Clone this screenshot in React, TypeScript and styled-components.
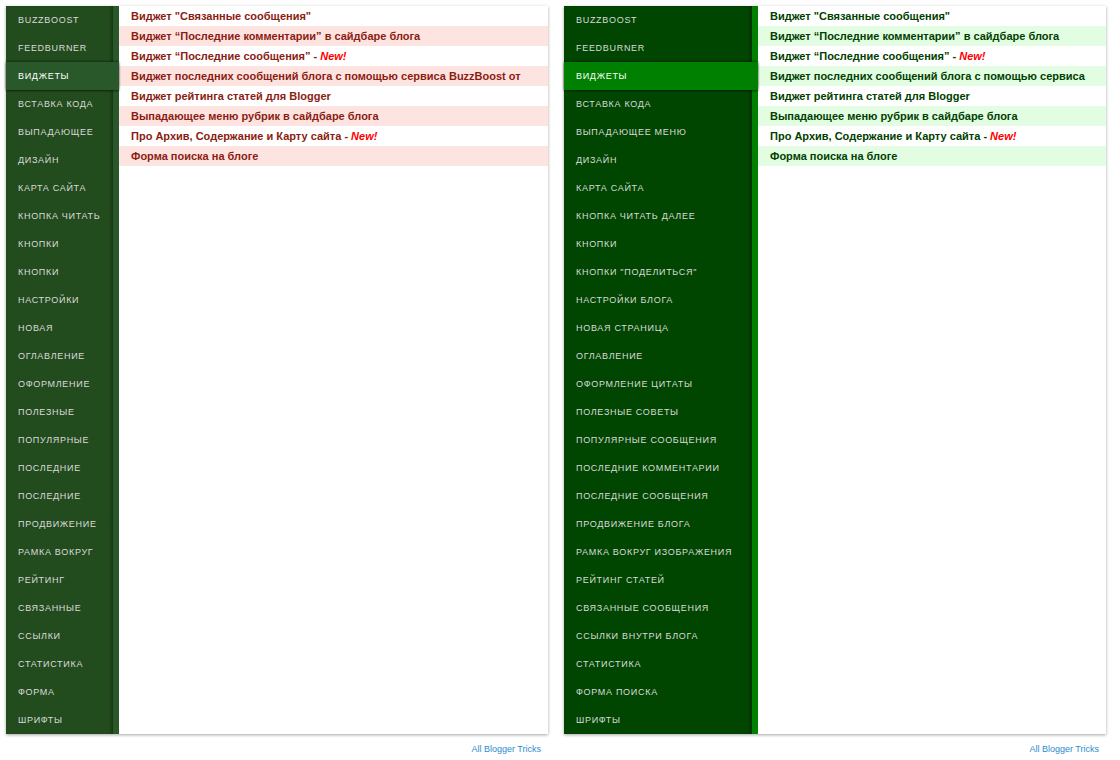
import { FC } from 'react';
import styled, { createGlobalStyle } from 'styled-components';

type Theme = 'red' | 'green';

interface IPalette {
  side: string;
  active: string;
  strip: string;
  rowAlt: string;
  text: string;
}

const palettes: Record<Theme, IPalette> = {
  red: {
    side: '#234c1e',
    active: '#29592a',
    strip: '#29592a',
    rowAlt: '#fee4e1',
    text: '#8a1c12',
  },
  green: {
    side: '#004600',
    active: '#008000',
    strip: '#008000',
    rowAlt: '#e2fde2',
    text: '#004000',
  },
};

const leftMenu = [
  'BUZZBOOST',
  'FEEDBURNER',
  'ВИДЖЕТЫ',
  'ВСТАВКА КОДА',
  'ВЫПАДАЮЩЕЕ',
  'ДИЗАЙН',
  'КАРТА САЙТА',
  'КНОПКА ЧИТАТЬ',
  'КНОПКИ',
  'КНОПКИ',
  'НАСТРОЙКИ',
  'НОВАЯ',
  'ОГЛАВЛЕНИЕ',
  'ОФОРМЛЕНИЕ',
  'ПОЛЕЗНЫЕ',
  'ПОПУЛЯРНЫЕ',
  'ПОСЛЕДНИЕ',
  'ПОСЛЕДНИЕ',
  'ПРОДВИЖЕНИЕ',
  'РАМКА ВОКРУГ',
  'РЕЙТИНГ',
  'СВЯЗАННЫЕ',
  'ССЫЛКИ',
  'СТАТИСТИКА',
  'ФОРМА',
  'ШРИФТЫ',
];

const rightMenu = [
  'BUZZBOOST',
  'FEEDBURNER',
  'ВИДЖЕТЫ',
  'ВСТАВКА КОДА',
  'ВЫПАДАЮЩЕЕ МЕНЮ',
  'ДИЗАЙН',
  'КАРТА САЙТА',
  'КНОПКА ЧИТАТЬ ДАЛЕЕ',
  'КНОПКИ',
  'КНОПКИ "ПОДЕЛИТЬСЯ"',
  'НАСТРОЙКИ БЛОГА',
  'НОВАЯ СТРАНИЦА',
  'ОГЛАВЛЕНИЕ',
  'ОФОРМЛЕНИЕ ЦИТАТЫ',
  'ПОЛЕЗНЫЕ СОВЕТЫ',
  'ПОПУЛЯРНЫЕ СООБЩЕНИЯ',
  'ПОСЛЕДНИЕ КОММЕНТАРИИ',
  'ПОСЛЕДНИЕ СООБЩЕНИЯ',
  'ПРОДВИЖЕНИЕ БЛОГА',
  'РАМКА ВОКРУГ ИЗОБРАЖЕНИЯ',
  'РЕЙТИНГ СТАТЕЙ',
  'СВЯЗАННЫЕ СООБЩЕНИЯ',
  'ССЫЛКИ ВНУТРИ БЛОГА',
  'СТАТИСТИКА',
  'ФОРМА ПОИСКА',
  'ШРИФТЫ',
];

interface IPost {
  title: string;
  isNew?: boolean;
}

// the long title is clipped differently in each panel width
const makePosts = (longTitle: string): IPost[] => [
  { title: 'Виджет "Связанные сообщения"' },
  { title: 'Виджет “Последние комментарии” в сайдбаре блога' },
  { title: 'Виджет “Последние сообщения” -', isNew: true },
  { title: longTitle },
  { title: 'Виджет рейтинга статей для Blogger' },
  { title: 'Выпадающее меню рубрик в сайдбаре блога' },
  { title: 'Про Архив, Содержание и Карту сайта -', isNew: true },
  { title: 'Форма поиска на блоге' },
];

const leftPosts = makePosts('Виджет последних сообщений блога с помощью сервиса BuzzBoost от');
const rightPosts = makePosts('Виджет последних сообщений блога с помощью сервиса');

const GlobalStyle = createGlobalStyle`
  body {
    margin: 0;
    background: #fff;
    font-family: "Liberation Sans", Arial, sans-serif;
  }
`;

const Page = styled.div`
  display: flex;
  gap: 16px;
  padding: 6px;
`;

const Column = styled.div`
  display: flex;
  flex-direction: column;
  width: 542px;
`;

const Panel = styled.div`
  display: flex;
  height: 728px;
  background: #fff;
  box-shadow: 0 1px 3px rgba(0, 0, 0, 0.35);
`;

const Sidebar = styled.ul<{ $w: number; $p: IPalette }>`
  list-style: none;
  margin: 0;
  padding: 0;
  width: ${(p) => p.$w}px;
  background: ${(p) => p.$p.side};
  border-right: 6px solid ${(p) => p.$p.strip};
  box-shadow: inset -3px 0 3px -1px rgba(0, 0, 0, 0.3);
  flex-shrink: 0;
`;

const MenuItem = styled.li<{ $active?: boolean; $p: IPalette }>`
  position: relative;
  height: 28px;
  line-height: 28px;
  padding-left: 12px;
  font-size: 9px;
  letter-spacing: 0.7px;
  white-space: nowrap;
  color: ${(p) => (p.$active ? '#fff' : '#dadada')};
  background: ${(p) => (p.$active ? p.$p.active : 'transparent')};
  margin-right: ${(p) => (p.$active ? '-6px' : '0')};
  box-shadow: ${(p) =>
    p.$active
      ? '0 1px 2px rgba(0, 0, 0, 0.55), 0 -1px 2px rgba(0, 0, 0, 0.35)'
      : 'none'};
  z-index: ${(p) => (p.$active ? 1 : 0)};
`;

const Posts = styled.ul`
  list-style: none;
  margin: 0;
  padding: 0;
  flex: 1;
  min-width: 0;
`;

const PostRow = styled.li<{ $alt: boolean; $p: IPalette }>`
  height: 20px;
  line-height: 20px;
  white-space: nowrap;
  padding-left: 12px;
  font-size: 11px;
  font-weight: bold;
  color: ${(p) => p.$p.text};
  background: ${(p) => (p.$alt ? p.$p.rowAlt : '#fff')};
`;

const NewMark = styled.em`
  color: #ff0000;
  font-weight: bold;
`;

const Footer = styled.div`
  text-align: right;
  padding: 10px 7px 0 0;
  font-size: 9px;
  color: #2c8ccd;
`;

interface IMenuProps {
  theme: Theme;
  menu: string[];
  posts: IPost[];
  sideWidth: number;
}

const MenuBox: FC<IMenuProps> = ({ theme, menu, posts, sideWidth }) => {
  const pal = palettes[theme];
  return (
    <Column>
      <Panel>
        <Sidebar $w={sideWidth} $p={pal}>
          {menu.map((label, i) => (
            <MenuItem key={i} $active={i === 2} $p={pal}>
              {label}
            </MenuItem>
          ))}
        </Sidebar>
        <Posts>
          {posts.map((post, i) => (
            <PostRow key={i} $alt={i % 2 === 1} $p={pal}>
              {post.title}
              {post.isNew && (
                <>
                  {' '}
                  <NewMark>New!</NewMark>
                </>
              )}
            </PostRow>
          ))}
        </Posts>
      </Panel>
      <Footer>All Blogger Tricks</Footer>
    </Column>
  );
};

const App: FC = () => (
  <>
    <GlobalStyle />
    <Page>
      <MenuBox theme="red" menu={leftMenu} posts={leftPosts} sideWidth={107} />
      <MenuBox theme="green" menu={rightMenu} posts={rightPosts} sideWidth={188} />
    </Page>
  </>
);

export default App;
